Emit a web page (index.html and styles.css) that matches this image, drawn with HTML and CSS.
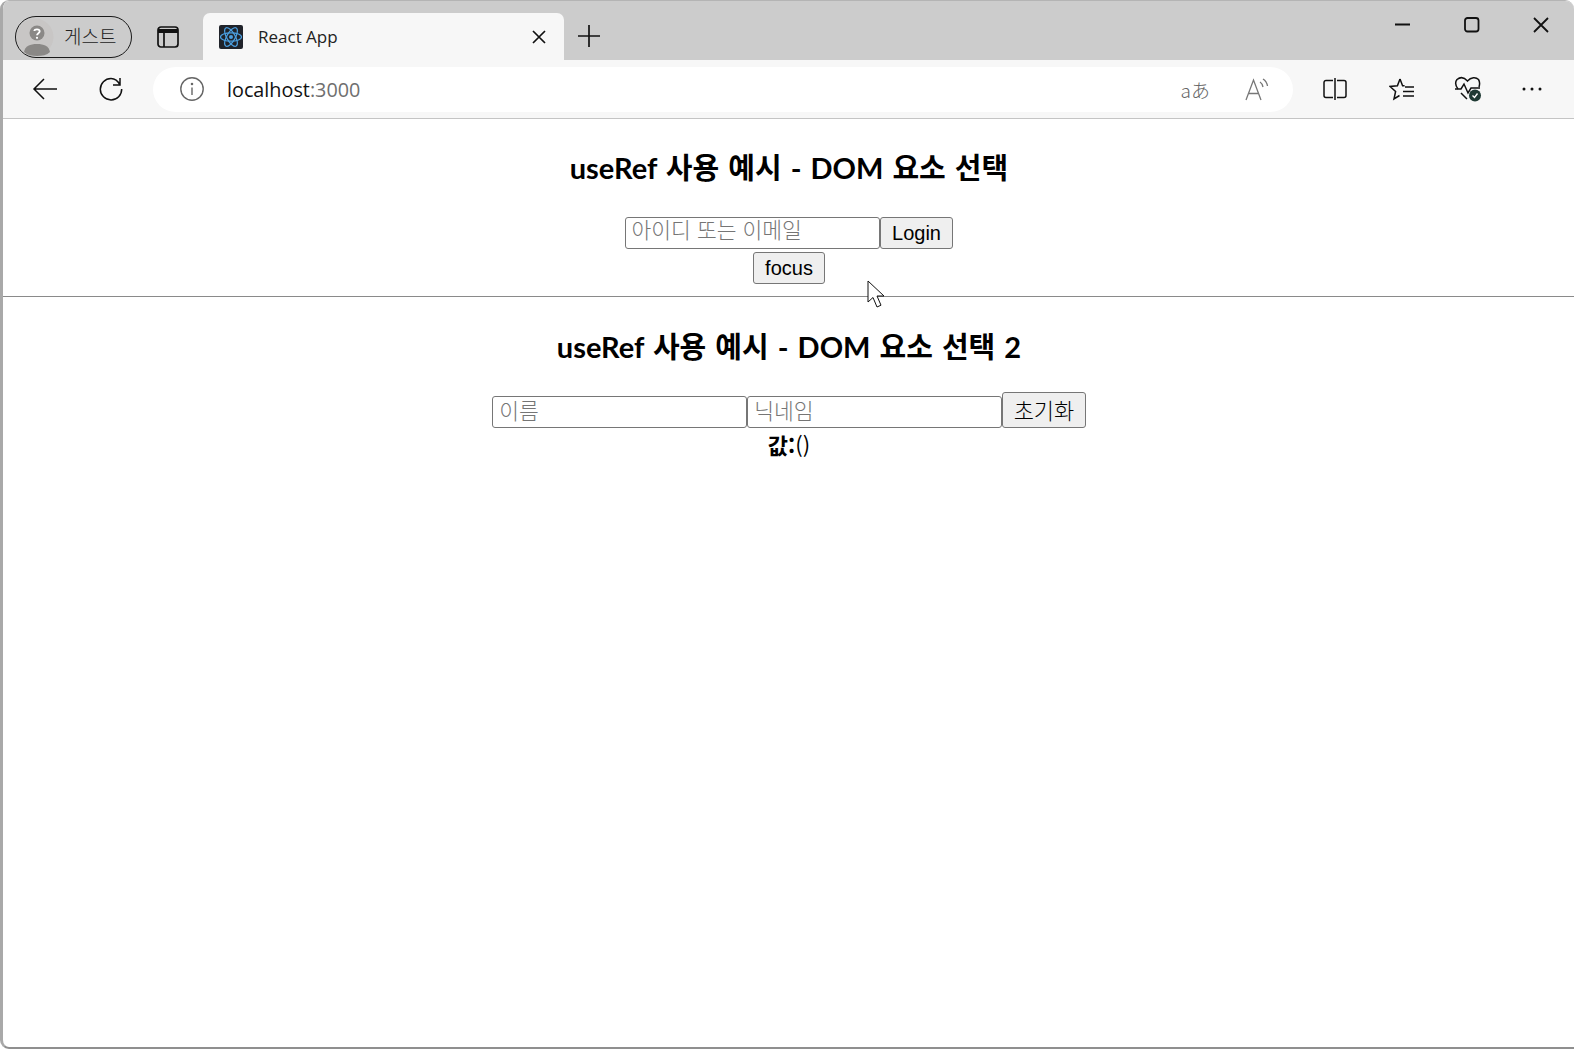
FILE: index.html
```html
<!DOCTYPE html>
<html lang="ko">
<head>
    <meta charset="UTF-8">
    <meta name="viewport" content="width=device-width, initial-scale=1.0">
    <title>React App</title>
    <link rel="stylesheet" href="styles.css">
</head>
<body>
<div class="window">
    <!-- tab strip -->
    <div class="tabstrip">
        <div class="guest">
            <svg class="avatar" width="38" height="38" viewBox="0 0 38 38">
                <circle cx="19" cy="19" r="18.500" fill="#c8c6c5"/>
                <circle cx="21" cy="15" r="7.500" fill="#8a8886"/>
                <path d="M8 34c1-6 6-8 13-8s12 2 13 8c-3 3-8 4-13 4s-10-1-13-4z" fill="#8a8886"/>
                <path d="M18.300 13c.3-2.300 5.200-2.300 5.400 .3.100 1.800-2.700 2-2.700 4" fill="none" stroke="#fff" stroke-width="1.800"/>
                <circle cx="21" cy="19.800" r="1.100" fill="#fff"/>
            </svg>
            <span class="guest-name">게스트</span>
        </div>
        <button class="strip-btn tab-actions" aria-label="tab actions">
            <svg width="22" height="22" viewBox="0 0 22 22" fill="none" stroke="#111" stroke-width="1.700">
                <rect x="1" y="1" width="20" height="20" rx="3"/>
                <path d="M1 5h20" stroke-width="4"/>
                <path d="M7 6v15"/>
            </svg>
        </button>
        <div class="tab">
            <svg class="favicon" width="24" height="24" viewBox="0 0 24 24">
                <rect width="24" height="24" rx="2" fill="#20232a"/>
                <g fill="none" stroke="#4b9fe0" stroke-width="1.200">
                    <ellipse cx="12" cy="12" rx="10.500" ry="4.200"/>
                    <ellipse cx="12" cy="12" rx="10.500" ry="4.200" transform="rotate(60 12 12)"/>
                    <ellipse cx="12" cy="12" rx="10.500" ry="4.200" transform="rotate(120 12 12)"/>
                </g>
                <circle cx="12" cy="12" r="2" fill="#4b9fe0"/>
            </svg>
            <span class="tab-title">React App</span>
            <svg class="tab-close" width="14" height="14" viewBox="0 0 14 14" stroke="#111" stroke-width="1.700">
                <path d="M1 1l12 12M13 1L1 13"/>
            </svg>
        </div>
        <svg class="new-tab" width="22" height="22" viewBox="0 0 22 22" stroke="#111" stroke-width="1.700">
            <path d="M11 0v22M0 11h22"/>
        </svg>
        <div class="win-controls">
            <svg width="16" height="16" viewBox="0 0 16 16" stroke="#111" stroke-width="2"><path d="M0 7.500h15"/></svg>
            <svg width="16" height="16" viewBox="0 0 16 16" fill="none" stroke="#111" stroke-width="1.800"><rect x="1" y="1" width="13.500" height="13.500" rx="2.500"/></svg>
            <svg width="16" height="16" viewBox="0 0 16 16" stroke="#111" stroke-width="1.800"><path d="M1 1l14 14M15 1L1 15"/></svg>
        </div>
    </div>

    <!-- toolbar -->
    <div class="toolbar">
        <svg class="nav-back" width="26" height="24" viewBox="0 0 26 24" fill="none" stroke="#111" stroke-width="1.500">
            <path d="M25 12H2M12 2L2 12l10 10"/>
        </svg>
        <svg class="nav-reload" width="26" height="26" viewBox="0 0 26 26" fill="none" stroke="#111" stroke-width="1.500">
            <path d="M22 2v7h-7M22 9C20 5 17 2.500 13 2.500A10.700 10.700 0 1 0 23.700 13"/>
        </svg>
        <div class="addressbar">
            <svg class="info" width="24" height="24" viewBox="0 0 24 24" fill="none" stroke="#666" stroke-width="1.400">
                <circle cx="12" cy="12" r="11.200"/>
                <path d="M12 10.500V18"/>
                <circle cx="12" cy="7" r=".6" fill="#666"/>
            </svg>
            <span class="url">localhost<span class="url-port">:3000</span></span>
            <span class="translate">aあ</span>
            <svg class="read-aloud" width="24" height="24" viewBox="0 0 24 24" fill="none" stroke="#777" stroke-width="1.300">
                <path d="M1 23L8.500 3 16 23M3.500 16.500h10"/>
                <path d="M15 5c1.500 1 2.500 2.500 3 5M18 2c2.500 1.500 4 4 4.500 7"/>
            </svg>
        </div>
        <div class="tools">
            <svg width="24" height="24" viewBox="0 0 24 24" fill="none" stroke="#111" stroke-width="1.500">
                <path d="M10 3.500H3a2 2 0 0 0-2 2v13a2 2 0 0 0 2 2h7M14 3.500h7a2 2 0 0 1 2 2v13a2 2 0 0 1-2 2h-7M12 1v22"/>
            </svg>
            <svg width="26" height="24" viewBox="0 0 26 24" fill="none" stroke="#111" stroke-width="1.500">
                <path d="M11 2l2.600 6.800h2M11 2L8.400 8.800 1 9.500l5.600 5L5 22l5.500-3.500"/>
                <path d="M16 10h9M14 14.500h11M14 19h11"/>
            </svg>
            <svg class="health" width="28" height="26" viewBox="0 0 28 26" fill="none" stroke="#111" stroke-width="1.500">
                <path d="M4 13C1 9 1 6 3 3.500 6 1 10 1 13.500 5 17 1 22 1 24.500 3.500 26 6 26 8 25 11"/>
                <path d="M1 13h6l3-5 4 9 3-5h9"/>
                <path d="M7 17l6 6"/>
                <circle cx="21" cy="19.500" r="6" fill="#1f3a34" stroke="none"/>
                <path d="M18.500 19.500l2 2 3-4" stroke="#fff" stroke-width="1.300"/>
            </svg>
            <svg class="more" width="20" height="6" viewBox="0 0 20 6" fill="#111">
                <circle cx="2" cy="3" r="1.500"/>
                <circle cx="10" cy="3" r="1.500"/>
                <circle cx="18" cy="3" r="1.500"/>
            </svg>
        </div>
    </div>

    <!-- page -->
    <main class="page">
        <h2>useRef 사용 예시 - DOM 요소 선택</h2>
        <div class="field-row">
            <input class="field field-top" type="text" placeholder="아이디 또는 이메일">
            <button class="btn">Login</button>
        </div>
        <div class="field-row">
            <button class="btn">focus</button>
        </div>
        <hr>
        <h2 class="title-second">useRef 사용 예시 - DOM 요소 선택 2</h2>
        <div class="field-row field-row-tall">
            <input class="field" type="text" placeholder="이름">
            <input class="field" type="text" placeholder="닉네임">
            <button class="btn btn-tall">초기화</button>
        </div>
        <div class="value"><b>값:</b>()</div>

        <svg class="cursor" width="20" height="29" viewBox="0 0 20 29">
            <path d="M1 1v21l5-4.500 4 9.500 4-1.800-4-9.200h7z" fill="#fff" stroke="#111" stroke-width="1"/>
        </svg>
    </main>
</div>
</body>
</html>
```

FILE: styles.css
```css
html, body {
    margin: 0;
    padding: 0;
    background: #fff;
}
body {
    font-family: "Noto Sans CJK KR", "Liberation Sans", sans-serif;
}
.window {
    display: flex;
    flex-direction: column;
    height: 1049px;
    box-sizing: border-box;
    border-left: 3px solid #a9a9a9;
    border-bottom: 2px solid #8f8f8f;
    border-top: 1px solid #b4b4b4;
    border-radius: 9px 9px 0 9px;
    overflow: hidden;
}

/* tab strip */
.tabstrip {
    display: flex;
    align-items: flex-start;
    height: 59px;
    background: #cccccc;
    flex: none;
}
.guest {
    display: flex;
    align-items: center;
    box-sizing: border-box;
    width: 117px;
    height: 42px;
    margin: 15px 0 0 12px;
    border: 1.5px solid #1a1a1a;
    border-radius: 21px;
    overflow: hidden;
}
.avatar {
    flex: none;
}
.guest-name {
    margin-left: 10px;
    margin-top: -4px;
    font-size: 19px;
    font-weight: 300;
    color: #222;
    white-space: nowrap;
}
.strip-btn {
    border: 0;
    padding: 0;
    background: none;
    line-height: 0;
}
.tab-actions {
    margin: 25px 0 0 25px;
}
.tab {
    display: flex;
    align-items: center;
    box-sizing: border-box;
    width: 361px;
    height: 47px;
    margin: 12px 0 0 24px;
    padding: 0 18px 0 16px;
    background: #f7f7f7;
    border-radius: 7px 7px 0 0;
}
.favicon {
    flex: none;
}
.tab-title {
    margin-left: 15px;
    flex: 1;
    font-family: "Open Sans", sans-serif;
    font-size: 17px;
    color: #222;
}
.new-tab {
    margin: 24px 0 0 14px;
}
.win-controls {
    display: flex;
    gap: 53px;
    margin: 16px 25px 0 auto;
}

/* toolbar */
.toolbar {
    display: flex;
    align-items: center;
    height: 58px;
    background: #f7f7f7;
    border-bottom: 1px solid #c4c4c4;
    flex: none;
}
.nav-back {
    margin-left: 29px;
}
.nav-reload {
    margin-left: 40px;
}
.addressbar {
    display: flex;
    align-items: center;
    box-sizing: border-box;
    width: 1140px;
    height: 45px;
    margin-left: 29px;
    padding: 0 26px 0 27px;
    background: #fff;
    border-radius: 23px;
}
.info {
    flex: none;
}
.url {
    margin-left: 23px;
    font-family: "Open Sans", sans-serif;
    font-size: 19.800px;
    color: #111;
}
.url-port {
    color: #6f6f6f;
}
.translate {
    margin-left: auto;
    font-size: 19px;
    font-weight: 300;
    color: #666;
}
.read-aloud {
    margin-left: 35px;
    margin-right: -2px;
}
.tools {
    display: flex;
    align-items: center;
    gap: 42px;
    margin-left: 30px;
}
.health {
    margin-left: -3px;
}
.more {
    margin-left: -2px;
}

/* page */
.page {
    position: relative;
    flex: 1;
    padding-left: 1px;
    text-align: center;
}
h2 {
    margin: 0;
    padding-top: 30px;
    height: 98px;
    box-sizing: border-box;
    font-family: "Lato", "Noto Sans CJK KR", sans-serif;
    font-size: 29px;
    line-height: 38px;
    font-weight: 700;
    word-spacing: 2px;
    color: #000;
}
.title-second {
    padding-top: 31px;
}
.field-row {
    display: flex;
    justify-content: center;
    align-items: flex-end;
    margin-bottom: 3px;
}
.field-row-tall {
    margin-top: -3px;
}
.field {
    box-sizing: border-box;
    width: 255px;
    height: 32px;
    margin: 0;
    padding: 0 6px 6px;
    border: 1px solid #767676;
    border-radius: 3px;
    background: #fff;
    font-family: "Noto Sans CJK KR", sans-serif;
    font-size: 21.500px;
    font-weight: 300;
    outline: none;
}
.field-top {
    padding-bottom: 10px;
}
.field::placeholder {
    color: #757575;
    opacity: 1;
}
.btn {
    box-sizing: border-box;
    height: 32px;
    margin: 0;
    padding: 0 11.500px;
    border: 1px solid #767676;
    border-radius: 3px;
    background: #efefef;
    font-family: "Liberation Sans", "Noto Sans CJK KR", sans-serif;
    font-size: 20px;
    color: #000;
}
.btn-tall {
    height: 36px;
    padding: 0 10.500px 2px;
    font-size: 22px;
    font-weight: 300;
}
hr {
    margin: 12px 0 0 -1px;
    border: 0;
    border-top: 1px solid #8a8a8a;
}
.value {
    font-size: 22px;
    line-height: 30px;
    margin-top: -2px;
}
.cursor {
    position: absolute;
    left: 864px;
    top: 161px;
}
```
